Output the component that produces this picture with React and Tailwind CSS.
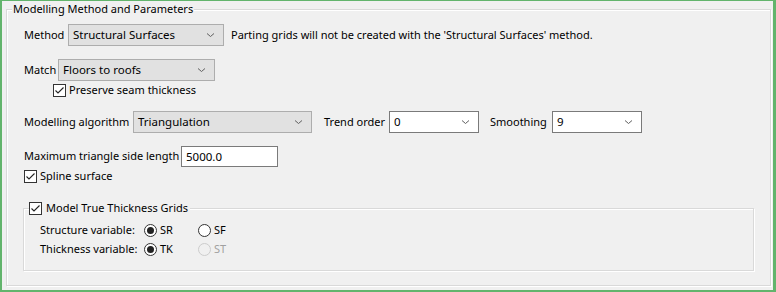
import React from "react";

const font = { fontFamily: "'Noto Sans', 'Open Sans', sans-serif" };

const Chevron = () => (
  <svg width="9" height="6" viewBox="0 0 9 6" className="shrink-0">
    <path d="M1 1.5 L4.5 4.5 L8 1.5" fill="none" stroke="#606060" strokeWidth="1" />
  </svg>
);

const Select = ({ value, className, white }) => (
  <div
    className={`flex items-center justify-between h-[22px] border pl-[4px] pr-[8px] shrink-0 ${
      white ? "bg-white border-[#7a7a7a]" : "bg-[#e1e1e1] border-[#adadad]"
    } ${className}`}
  >
    <span className="leading-none text-[11.5px]">{value}</span>
    <Chevron />
  </div>
);

const Check = ({ checked = true }) => (
  <span className="flex items-center justify-center w-[13px] h-[13px] border border-[#333] bg-white shrink-0">
    {checked && (
      <svg width="11" height="11" viewBox="0 0 11 11">
        <path d="M1.5 5.5 L4 8 L9.5 2.5" fill="none" stroke="#222" strokeWidth="1.1" />
      </svg>
    )}
  </span>
);

const Radio = ({ checked, disabled }) => (
  <span
    className={`flex items-center justify-center w-[13px] h-[13px] rounded-full border shrink-0 ${
      disabled ? "border-[#cccccc] bg-[#f0f0f0]" : "border-[#333] bg-white"
    }`}
  >
    {checked && <span className="w-[7px] h-[7px] rounded-full bg-[#222]" />}
  </span>
);

export default function App() {
  return (
    <div
      style={font}
      className="w-[776px] h-[292px] bg-[#f0f0f0] border-t border-l-2 border-r-[3px] border-b-2 border-[#62b46c] text-[11px] text-black overflow-hidden whitespace-nowrap"
    >
      <div className="pt-[8px] pl-[4px] pr-[2px]">
        <div className="relative h-[277px] border border-[#d9d9d9] shadow-[inset_1px_1px_0_#ffffff,1px_1px_0_#ffffff]">
          <span className="absolute left-[5px] -top-[9px] px-[1px] bg-[#f0f0f0] leading-[16px]">
            Modelling Method and Parameters
          </span>

          <div className="pt-[14px] pl-[17px]">
            <div className="flex items-center h-[22px]">
              <span className="w-[44px]">Method</span>
              <Select value="Structural Surfaces" className="w-[156px]" />
              <span className="ml-[7px]">
                Parting grids will not be created with the 'Structural Surfaces' method.
              </span>
            </div>

            <div className="flex items-center h-[22px] mt-[13px]">
              <span className="w-[34px]">Match</span>
              <Select value="Floors to roofs" className="w-[157px]" />
            </div>
            <div className="flex items-center gap-[3px] h-[16px] ml-[29px] mt-[1px]">
              <Check />
              <span>Preserve seam thickness</span>
            </div>

            <div className="flex items-center h-[22px] mt-[13px]">
              <span className="w-[109px]">Modelling algorithm</span>
              <Select value="Triangulation" className="w-[179px]" />
              <span className="ml-[12px] w-[65px]">Trend order</span>
              <Select value="0" white className="w-[90px]" />
              <span className="ml-[11px] w-[62px]">Smoothing</span>
              <Select value="9" white className="w-[90px]" />
            </div>

            <div className="flex items-center h-[21px] mt-[13px]">
              <span className="w-[157px]">Maximum triangle side length</span>
              <div className="flex items-center w-[97px] h-[21px] bg-white border border-[#7a7a7a] pl-[4px] text-[11.5px]">
                5000.0
              </div>
            </div>
            <div className="flex items-center gap-[3px] h-[16px] mt-[1px]">
              <Check />
              <span>Spline surface</span>
            </div>

            <div className="relative mt-[24px] ml-[-1px] w-[731px] h-[63px] border border-[#d9d9d9] shadow-[inset_1px_1px_0_#ffffff,1px_1px_0_#ffffff]">
              <div className="absolute left-[5px] -top-[9px] flex items-center gap-[4px] pr-[2px] bg-[#f0f0f0] h-[16px]">
                <Check />
                <span>Model True Thickness Grids</span>
              </div>
              <div className="pt-[12px] pl-[16px]">
                <div className="flex items-center h-[18px]">
                  <span className="w-[104px]">Structure variable:</span>
                  <Radio checked />
                  <span className="ml-[3px] w-[38px]">SR</span>
                  <Radio />
                  <span className="ml-[3px]">SF</span>
                </div>
                <div className="flex items-center h-[18px] mt-[1px]">
                  <span className="w-[104px]">Thickness variable:</span>
                  <Radio checked />
                  <span className="ml-[3px] w-[38px]">TK</span>
                  <Radio disabled />
                  <span className="ml-[3px] text-[#a0a0a0]">ST</span>
                </div>
              </div>
            </div>
          </div>
        </div>
      </div>
    </div>
  );
}
